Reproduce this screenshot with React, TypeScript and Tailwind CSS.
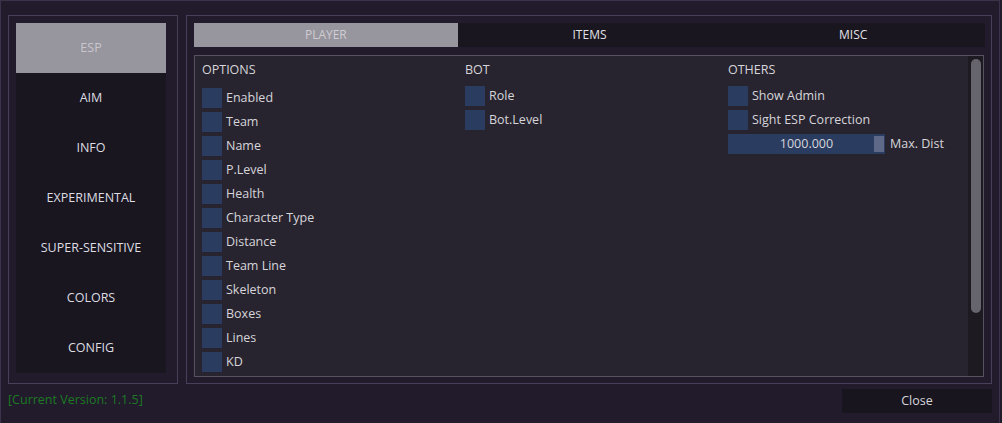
import React from "react";

const font = { fontFamily: '"Open Sans", "Noto Sans", sans-serif' };

const navItems = ["ESP", "AIM", "INFO", "EXPERIMENTAL", "SUPER-SENSITIVE", "COLORS", "CONFIG"];
const tabs = ["PLAYER", "ITEMS", "MISC"];
const options = ["Enabled", "Team", "Name", "P.Level", "Health", "Character Type", "Distance", "Team Line", "Skeleton", "Boxes", "Lines", "KD"];

function Check({ label }: { label: string }) {
  return (
    <div className="flex items-center h-[20px] gap-[4px]">
      <div className="w-[20px] h-[20px] bg-[#2a3c60] shrink-0" />
      <span className="text-[12.5px] text-[#d6d5da] whitespace-nowrap leading-none">{label}</span>
    </div>
  );
}

export default function App() {
  return (
    <div style={font} className="w-[1002px] h-[423px] bg-[#211b2c] overflow-hidden">
      <div className="w-[1000px] h-[423px] border-t border-l border-r border-[#3a334a] flex flex-col">
        <div className="flex gap-[8px] pl-[7px] pt-[14px]">
          {/* Left panel */}
          <div className="w-[170px] h-[369px] border border-[#47405a] pt-[7px] pl-[7px]">
            <div className="w-[150px] h-[350px] bg-[#19161f] flex flex-col">
              {navItems.map((n, i) => (
                <div
                  key={n}
                  className={
                    "h-[50px] flex items-center justify-center text-[12.5px] " +
                    (i === 0 ? "bg-[#97959d] text-[#c9c7cd]" : "text-[#dddce2]")
                  }
                >
                  {n}
                </div>
              ))}
            </div>
          </div>
          {/* Right panel */}
          <div className="w-[806px] h-[369px] border border-[#47405a] pt-[7px] pl-[7px] pr-[6px]">
            <div className="flex h-[24px] bg-[#19161f]">
              {tabs.map((t, i) => (
                <div
                  key={t}
                  className={
                    "flex-1 flex items-center justify-center text-[12px] " +
                    (i === 0 ? "bg-[#97959d] text-[#cfcdd3]" : "text-[#e2e1e6]")
                  }
                >
                  {t}
                </div>
              ))}
            </div>
            <div className="mt-[8px] w-[790px] h-[322px] border border-[#57525f] bg-[#28242f] flex">
              <div className="flex-1 flex pl-[7px] pt-[6px]">
                {/* OPTIONS */}
                <div className="w-[263px] flex flex-col">
                  <div className="text-[12.5px] text-[#d6d5da] h-[16px] leading-[16px]">OPTIONS</div>
                  <div className="mt-[10px] flex flex-col gap-[4px]">
                    {options.map((o) => (
                      <Check key={o} label={o} />
                    ))}
                  </div>
                </div>
                {/* BOT */}
                <div className="w-[263px] flex flex-col">
                  <div className="text-[12.5px] text-[#d6d5da] h-[16px] leading-[16px]">BOT</div>
                  <div className="mt-[8px] flex flex-col gap-[4px]">
                    <Check label="Role" />
                    <Check label="Bot.Level" />
                  </div>
                </div>
                {/* OTHERS */}
                <div className="w-[238px] flex flex-col">
                  <div className="text-[12.5px] text-[#d6d5da] h-[16px] leading-[16px]">OTHERS</div>
                  <div className="mt-[8px] flex flex-col gap-[4px]">
                    <Check label="Show Admin" />
                    <Check label="Sight ESP Correction" />
                    <div className="flex items-center h-[20px] gap-[5px]">
                      <div className="relative w-[157px] h-[20px] bg-[#2a3c60] flex items-center justify-center">
                        <span className="text-[12.5px] text-[#d6d5da] leading-none">1000.000</span>
                        <div className="absolute right-[1px] top-[2px] w-[10px] h-[16px] bg-[#5d6987]" />
                      </div>
                      <span className="text-[12.5px] text-[#d6d5da] leading-none">Max. Dist</span>
                    </div>
                  </div>
                </div>
              </div>
              {/* Scrollbar */}
              <div className="w-[15px] h-[320px] bg-[#1d1a22] pt-[3px] flex justify-center">
                <div className="w-[10px] h-[254px] rounded-full bg-[#66646c]" />
              </div>
            </div>
          </div>
        </div>
        {/* Footer */}
        <div className="flex items-start justify-between pl-[7px] pt-[5px] pr-[7px]">
          <span className="text-[12.5px] text-[#1d7a22] leading-[16px] mt-[3px]">[Current Version: 1.1.5]</span>
          <div className="w-[150px] h-[24px] bg-[#19151f] flex items-center justify-center text-[12.5px] text-[#d6d5da]">
            Close
          </div>
        </div>
      </div>
    </div>
  );
}
